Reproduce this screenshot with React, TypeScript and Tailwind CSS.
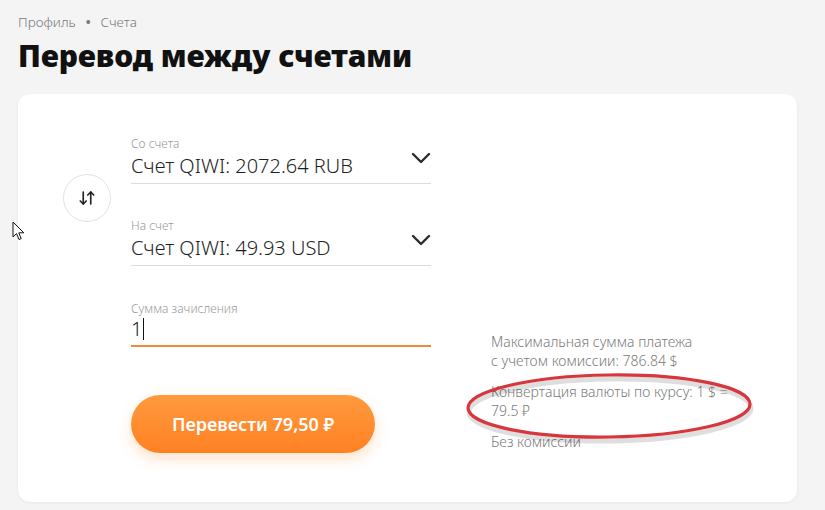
import { ArrowDownUp } from "lucide-react";

function Chevron() {
    return (
        <svg width="20" height="12" viewBox="0 0 20 12" className="shrink-0 mb-[14px]">
            <path d="M2 2 L10 10 L18 2" fill="none" stroke="#2b2b2b" strokeWidth="2.4" strokeLinecap="round" strokeLinejoin="round" />
        </svg>
    );
}

function SelectField({ label, value }: { label: string; value: string }) {
    return (
        <div className="flex flex-col">
            <span className="text-[12px] leading-4 text-[#9a9a9a] font-light">{label}</span>
            <div className="flex items-end justify-between border-b border-[#dcdcdc] pb-[5px]">
                <span className="text-[20px] leading-6 text-[#1f1f1f] font-light">{value}</span>
                <Chevron />
            </div>
        </div>
    );
}

export default function App() {
    return (
        <div className="relative w-[825px] h-[510px] overflow-hidden bg-[#f4f4f4] px-[18px] pt-[12px] font-['Noto_Sans',sans-serif]">
            <div className="flex items-center gap-[10px] text-[13.5px] leading-5 text-[#7a7a7a] font-light">
                <span>Профиль</span>
                <span className="text-[13px] font-bold">•</span>
                <span>Счета</span>
            </div>
            <h1 className="mt-[4px] text-[30px] leading-10 font-black tracking-[-0.1px] text-[#111]">Перевод между счетами</h1>

            <div className="mt-[18px] w-[779px] h-[408px] bg-white rounded-xl shadow-[0_1px_3px_rgba(0,0,0,0.06)] flex items-start pl-[45px] pt-[42px]">
                <div className="mt-[38px] w-12 h-12 rounded-full border border-[#e2e2e2] flex items-center justify-center">
                    <ArrowDownUp size={18} strokeWidth={2.2} className="text-[#222]" />
                </div>

                <div className="ml-[20px] w-[300px] flex flex-col">
                    <SelectField label="Со счета" value="Счет QIWI: 2072.64 RUB" />
                    <div className="mt-[34px]">
                        <SelectField label="На счет" value="Счет QIWI: 49.93 USD" />
                    </div>
                    <div className="mt-[35px] flex flex-col">
                        <span className="text-[12px] leading-4 text-[#9a9a9a] font-light">Сумма зачисления</span>
                        <div className="flex items-center border-b-2 border-[#f08a36] pb-[4px]">
                            <span className="text-[20px] leading-6 text-[#1f1f1f] font-light">1</span>
                            <span className="ml-[1px] w-px h-[22px] bg-[#111]" />
                        </div>
                    </div>
                    <button className="mt-[48px] w-[244px] h-[58px] rounded-full bg-gradient-to-b from-[#ff9a3d] to-[#ff8123] shadow-[0_6px_14px_rgba(255,140,40,0.25)] text-white text-[18px] font-semibold">
                        Перевести 79,50 ₽
                    </button>
                </div>

                <div className="ml-[60px] mt-[196px] w-[258px] flex flex-col gap-[12px] text-[14px] leading-[19px] text-[#7a7a7a] font-light">
                    <p>Максимальная сумма платежа<br />с учетом комиссии: 786.84 $</p>
                    <p>Конвертация валюты по курсу: 1 $ = 79.5 ₽</p>
                    <p>Без комиссии</p>
                </div>
            </div>

            <svg className="absolute left-[460px] top-[368px] pointer-events-none" width="300" height="80" viewBox="0 0 300 80">
                <ellipse cx="149" cy="40" rx="141" ry="31" fill="none" stroke="rgba(0,0,0,0.13)" strokeWidth="5" transform="rotate(-0.8 149 40) translate(1 2)" />
                <ellipse cx="149" cy="38" rx="141" ry="31" fill="none" stroke="#d8363d" strokeWidth="3.2" transform="rotate(-0.8 149 38)" />
            </svg>

            <svg className="absolute left-[12px] top-[221px] pointer-events-none" width="14" height="21" viewBox="0 0 14 21">
                <path d="M1 1 L1 16 L4.5 12.5 L7 18.5 L9.2 17.6 L6.8 11.8 L11.8 11.8 Z" fill="#fff" stroke="#111" strokeWidth="1" strokeLinejoin="round" />
            </svg>
        </div>
    );
}
